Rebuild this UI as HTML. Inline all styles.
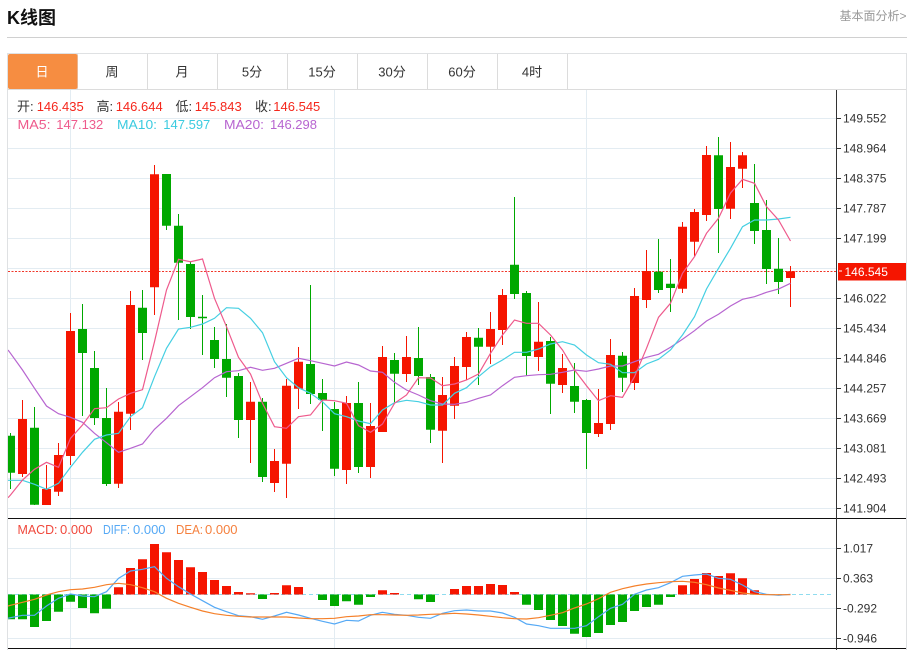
<!DOCTYPE html>
<html lang="zh">
<head>
<meta charset="utf-8">
<title>K线图</title>
<style>
html,body{margin:0;padding:0;background:#fff;width:909px;height:650px;overflow:hidden}
svg{display:block;font-family:"Liberation Sans","Noto Sans CJK SC",sans-serif}
</style>
</head>
<body>
<svg xmlns="http://www.w3.org/2000/svg" width="909" height="650" viewBox="0 0 909 650">
<defs><clipPath id="c"><rect x="8" y="90" width="828" height="560"/></clipPath></defs>

<text x="7" y="24" font-size="18" font-weight="700" fill="#111">K线图</text>
<text x="839.5" y="20" font-size="12" fill="#999">基本面分析&gt;</text>
<path d="M7 37.5H907" stroke="#d0d0d0" fill="none"/>

<path d="M7.5 650V53.5H906.5V650" stroke="#dfe1e3" fill="none"/>
<path d="M8 89.5H906M147.5 54V89M217.5 54V89M287.5 54V89M357.5 54V89M427.5 54V89M497.5 54V89M567.5 54V89M77.5 54V89" stroke="#dcdcdc" fill="none"/>
<rect x="8" y="54" width="69.5" height="35" rx="2" fill="#f68d41"/>
<g font-size="13" fill="#333" text-anchor="middle">
<text x="42" y="76.5" fill="#fff">日</text>
<text x="112" y="76.5">周</text>
<text x="182" y="76.5">月</text>
<text x="252" y="76.5">5分</text>
<text x="322" y="76.5">15分</text>
<text x="392" y="76.5">30分</text>
<text x="462" y="76.5">60分</text>
<text x="532" y="76.5">4时</text>
</g>

<path d="M8 118.5H836M8 148.5H836M8 178.5H836M8 208.5H836M8 238.5H836M8 268.5H836M8 298.5H836M8 328.5H836M8 358.5H836M8 388.5H836M8 418.5H836M8 448.5H836M8 478.5H836M8 508.5H836M8 548.5H836M8 578.5H836M8 608.5H836M8 638.5H836M70.5 90V648M334.5 90V648M586.5 90V648" stroke="#e3ecf2" fill="none"/>

<path d="M8 271.5H836" stroke="#f0372a" stroke-dasharray="2 1.5" fill="none"/>

<g clip-path="url(#c)">
<path fill="none" stroke="#f51500" d="M22.5 400V477M46.5 465V505M58.5 443V496M70.5 313V465M118.5 402V488M130.5 291V430M154.5 165V315M250.5 382V463M274.5 449V492M286.5 379V498M298.5 347V409M346.5 396V484M370.5 403V478M382.5 346V432M406.5 336V382M442.5 377V463M454.5 357V419M466.5 332V380M490.5 312V364M502.5 289V345M538.5 302V371M562.5 354V393M598.5 389V437M610.5 339V430M634.5 288V390M646.5 250V308M682.5 222V293M694.5 209V256M706.5 146V221M730.5 142V219M742.5 152V188M790.5 266V307"/>
<path fill="none" stroke="#00a800" d="M10.5 433V489M34.5 407V505M82.5 304V416M94.5 351V425M106.5 388V486M142.5 290V360M166.5 174V230M178.5 214V320M190.5 261V329M202.5 295V355M214.5 327V368M226.5 324V397M238.5 373V438M262.5 398V482M310.5 285V404M322.5 379V431M334.5 402V476M358.5 382V473M394.5 353V403M418.5 327V385M430.5 374V443M478.5 328V385M514.5 197V299M526.5 291V376M550.5 337V414M574.5 363V413M586.5 399V469M622.5 352V392M658.5 239V293M670.5 259V312M718.5 137V253M754.5 164V244M766.5 200V284M778.5 238V294"/>
<path fill="#f51500" d="M18 419h9v55h-9zM42 489h9v16h-9zM54 455h9v36.7h-9zM66 331h9v125h-9zM114 411.7h9v72h-9zM126 305h9v108.7h-9zM150 174.3h9v113h-9zM246 401.7h9v18.3h-9zM270 461h9v22h-9zM282 385.7h9v78h-9zM294 361.7h9v27h-9zM342 403h9v67h-9zM366 426h9v41h-9zM378 357h9v75h-9zM402 357h9v17h-9zM438 395h9v35.7h-9zM450 366h9v39.7h-9zM462 337h9v30h-9zM486 329h9v17.7h-9zM498 295h9v35h-9zM534 341.7h9v15.3h-9zM558 368h9v17h-9zM594 423h9v11h-9zM606 355h9v69h-9zM630 296h9v87h-9zM642 271h9v29h-9zM678 226.7h9v62h-9zM690 212h9v29.7h-9zM702 155h9v60h-9zM726 167h9v41.7h-9zM738 155.3h9v13.4h-9zM786 271.3h9v6.7h-9z"/>
<path fill="#00a800" d="M8 435.7h7v37h-7zM30 427.7h9v77h-9zM78 329h9v24h-9zM90 368h9v50h-9zM102 418h9v66h-9zM138 307.7h9v25.3h-9zM162 174h9v51.7h-9zM174 225.7h9v37h-9zM186 264h9v53h-9zM198 316.7h9v1.5h-9zM210 340h9v19h-9zM222 359h9v18.7h-9zM234 376h9v44h-9zM258 401.7h9v75.3h-9zM306 364h9v30h-9zM318 393h9v7h-9zM330 409h9v59.7h-9zM354 403h9v64h-9zM390 360h9v13.7h-9zM414 358h9v18h-9zM426 377h9v52.7h-9zM474 337.7h9v9h-9zM510 264.7h9v29.3h-9zM522 293h9v63h-9zM546 341h9v42.7h-9zM570 386h9v15.7h-9zM582 400h9v33h-9zM618 355.7h9v22h-9zM654 271.7h9v18.3h-9zM666 283.7h9v4.3h-9zM714 155.3h9v53.7h-9zM750 203h9v28h-9zM762 230h9v39h-9zM774 268.7h9v13.3h-9z"/>

<polyline fill="none" stroke="#b765d0" stroke-width="1.2" points="8,350 10.5,353.3 22.5,370 34.5,388.3 46.5,406 58.5,413.7 70.5,417.3 82.5,422.3 94.5,433.3 106.5,442.7 118.5,452.3 130.5,448.3 142.5,444 154.5,429.3 166.5,418.3 178.5,405.7 190.5,396.7 202.5,387.7 214.5,377.7 226.5,371.7 238.5,370.7 250.5,367.3 262.5,370.3 274.5,368.3 286.5,363.3 298.5,358.3 310.5,360.7 322.5,363.3 334.5,366 346.5,362 358.5,365 370.5,371 382.5,372.3 394.5,382.3 406.5,390 418.5,395 430.5,400.7 442.5,404 454.5,404.3 466.5,402.3 478.5,398.3 490.5,395 502.5,385.7 514.5,377.3 526.5,375.7 538.5,374.7 550.5,374.3 562.5,372.3 574.5,370 586.5,371.3 598.5,369 610.5,366 622.5,366 634.5,361.7 646.5,357.3 658.5,354.3 670.5,347.3 682.5,339.3 694.5,330.7 706.5,321 718.5,314.3 730.5,306 742.5,299.3 754.5,296.7 766.5,292.3 778.5,289 790.5,283.3"/>
<polyline fill="none" stroke="#45cfe2" stroke-width="1.2" points="8,480.3 22.5,480.3 34.5,484.3 46.5,489.3 58.5,483.3 70.5,467.3 82.5,452.3 94.5,439.3 106.5,435 118.5,433.3 130.5,416.7 142.5,407.7 154.5,376.7 166.5,348.3 178.5,329 190.5,327.3 202.5,324 214.5,318.3 226.5,307.7 238.5,308.3 250.5,318.3 262.5,332.7 274.5,361.7 286.5,377.7 298.5,387.7 310.5,393.3 322.5,401.7 334.5,413.7 346.5,416.7 358.5,421 370.5,423.7 382.5,410 394.5,402.7 406.5,400.3 418.5,401.7 430.5,405 442.5,405 454.5,393.3 466.5,387.7 478.5,376.7 490.5,366.7 502.5,360 514.5,352.3 526.5,352.3 538.5,349 550.5,344 562.5,341.7 574.5,345 586.5,355 598.5,362.7 610.5,364.3 622.5,372.7 634.5,372.7 646.5,364 658.5,359.3 670.5,350 682.5,335 694.5,316.7 706.5,289 718.5,268.3 730.5,248.3 742.5,226.7 754.5,220 766.5,220 778.5,219 790.5,217.3"/>
<polyline fill="none" stroke="#ee5a8c" stroke-width="1.2" points="8,497.7 10.5,495 22.5,480 34.5,469.3 46.5,462.3 58.5,467.3 70.5,438.3 82.5,425 94.5,408.7 106.5,407.7 118.5,399 130.5,393.3 142.5,389.7 154.5,341.7 166.5,290 178.5,259.3 190.5,261.7 202.5,259 214.5,298.3 226.5,326.7 238.5,357.3 250.5,374 262.5,403.3 274.5,426.7 286.5,428.3 298.5,416.7 310.5,415 322.5,400 334.5,400.7 346.5,403.3 358.5,425.7 370.5,432.3 382.5,424 394.5,403.3 406.5,395 418.5,377.7 430.5,378 442.5,385.7 454.5,384 466.5,380 478.5,374 490.5,353.3 502.5,335 514.5,320 526.5,323.3 538.5,323.3 550.5,335 562.5,350 574.5,370 586.5,385.7 598.5,400.7 610.5,395.7 622.5,397.3 634.5,376.7 646.5,348.3 658.5,317.3 670.5,303.3 682.5,273.3 694.5,256.7 706.5,233.3 718.5,218.3 730.5,193 742.5,179.3 754.5,183.3 766.5,206.7 778.5,220 790.5,241"/>

<path d="M8 594.5H833" stroke="#8fdcef" stroke-dasharray="4 3" fill="none"/>
<path fill="#f51500" d="M114 587.3h9v7.2h-9zM126 568h9v26.5h-9zM138 559.3h9v35.2h-9zM150 544h9v50.5h-9zM162 552.3h9v42.2h-9zM174 560h9v34.5h-9zM186 567.3h9v27.2h-9zM198 572h9v22.5h-9zM210 580h9v14.5h-9zM222 586h9v8.5h-9zM234 592h9v2.5h-9zM246 593.3h9v1.2h-9zM270 593h9v1.5h-9zM282 585.3h9v9.2h-9zM294 587h9v7.5h-9zM378 590.3h9v4.2h-9zM390 593h9v1.5h-9zM450 589h9v5.5h-9zM462 586h9v8.5h-9zM474 586h9v8.5h-9zM486 584h9v10.5h-9zM498 585h9v9.5h-9zM510 592h9v2.5h-9zM678 585.3h9v9.2h-9zM690 579h9v15.5h-9zM702 573h9v21.5h-9zM714 576h9v18.5h-9zM726 573.3h9v21.2h-9zM738 578.3h9v16.2h-9zM750 590.3h9v4.2h-9z"/>
<path fill="#00a800" d="M8 594.5h7v24.8h-7zM18 594.5h9v24.8h-9zM30 594.5h9v32.5h-9zM42 594.5h9v26.5h-9zM54 594.5h9v17.2h-9zM66 594.5h9v7.2h-9zM78 594.5h9v13.5h-9zM90 594.5h9v18.8h-9zM102 594.5h9v14.2h-9zM258 594.5h9v4.5h-9zM318 594.5h9v5.5h-9zM330 594.5h9v11.5h-9zM342 594.5h9v6.8h-9zM354 594.5h9v10.2h-9zM366 594.5h9v2.5h-9zM414 594.5h9v4.8h-9zM426 594.5h9v7.5h-9zM522 594.5h9v10.2h-9zM534 594.5h9v15.5h-9zM546 594.5h9v25.5h-9zM558 594.5h9v31.5h-9zM570 594.5h9v39.2h-9zM582 594.5h9v42.5h-9zM594 594.5h9v38.5h-9zM606 594.5h9v30.5h-9zM618 594.5h9v27.5h-9zM630 594.5h9v16.5h-9zM642 594.5h9v12.5h-9zM654 594.5h9v10.2h-9zM666 594.5h9v2.5h-9z"/>
<polyline fill="none" stroke="#55a9f5" stroke-width="1.2" points="8,618.3 10.5,617.7 22.5,615.3 34.5,615.3 46.5,606 58.5,598.3 70.5,594 82.5,596 94.5,596.7 106.5,591.7 118.5,578.3 130.5,571 142.5,569.3 154.5,566.7 166.5,578.3 178.5,586.7 190.5,594 202.5,600.7 214.5,607.3 226.5,611.7 238.5,615.7 250.5,616.7 262.5,619.3 274.5,616 286.5,612.3 298.5,615 310.5,618.3 322.5,621.3 334.5,624 346.5,620.3 358.5,621 370.5,615.3 382.5,612.3 394.5,614.3 406.5,615.3 418.5,617.3 430.5,618.3 442.5,613.3 454.5,610.7 466.5,610 478.5,611 490.5,611 502.5,613 514.5,617.3 526.5,624 538.5,625.7 550.5,628.3 562.5,628.3 574.5,628.3 586.5,625.7 598.5,616.7 610.5,608.3 622.5,604.3 634.5,594.3 646.5,590 658.5,587.7 670.5,582.7 682.5,576.3 694.5,575 706.5,574 718.5,578.3 730.5,579.3 742.5,585 754.5,591.7 766.5,594.3 778.5,595.3 790.5,594.3"/>
<polyline fill="none" stroke="#f5802a" stroke-width="1.2" points="8,606 10.5,605.3 22.5,602.3 34.5,599.3 46.5,595 58.5,591.7 70.5,589.7 82.5,589 94.5,587.3 106.5,584.7 118.5,583.3 130.5,584.7 142.5,587.7 154.5,591.7 166.5,598.3 178.5,603.3 190.5,607.3 202.5,611 214.5,613.7 226.5,615.3 238.5,616.3 250.5,617 262.5,617 274.5,617 286.5,617 298.5,618 310.5,618.7 322.5,618.7 334.5,618.3 346.5,616.7 358.5,616 370.5,614.7 382.5,614.7 394.5,615 406.5,615.3 418.5,615 430.5,614.3 442.5,614 454.5,613.3 466.5,614 478.5,615 490.5,616.3 502.5,617.7 514.5,618.7 526.5,619 538.5,617.7 550.5,615.3 562.5,612.7 574.5,608 586.5,604 598.5,598.7 610.5,592.3 622.5,588.7 634.5,586 646.5,584 658.5,582.7 670.5,581.7 682.5,581.3 694.5,582.3 706.5,584.7 718.5,588 730.5,590.3 742.5,593 754.5,594.3 766.5,594.7 778.5,594.7 790.5,594.7"/>
</g>

<path d="M8 518.5H906M8 648.5H906" stroke="#111" fill="none"/>
<path d="M836.5 90V650" stroke="#333" fill="none"/>
<path d="M837 118.5h4M837 148.5h4M837 178.5h4M837 208.5h4M837 238.5h4M837 298.5h4M837 328.5h4M837 358.5h4M837 388.5h4M837 418.5h4M837 448.5h4M837 478.5h4M837 508.5h4M837 548.5h4M837 578.5h4M837 608.5h4M837 638.5h4" stroke="#333" fill="none"/>

<g font-size="12" fill="#333">
<text x="843" y="122.5">149.552</text>
<text x="843" y="152.5">148.964</text>
<text x="843" y="182.5">148.375</text>
<text x="843" y="212.5">147.787</text>
<text x="843" y="242.5">147.199</text>
<text x="843" y="302.5">146.022</text>
<text x="843" y="332.5">145.434</text>
<text x="843" y="362.5">144.846</text>
<text x="843" y="392.5">144.257</text>
<text x="843" y="422.5">143.669</text>
<text x="843" y="452.5">143.081</text>
<text x="843" y="482.5">142.493</text>
<text x="843" y="512.5">141.904</text>
<text x="843" y="552.5">1.017</text>
<text x="843" y="582.5">0.363</text>
<text x="843" y="612.5">-0.292</text>
<text x="843" y="642.5">-0.946</text>
</g>
<rect x="838" y="263" width="68" height="17.5" fill="#f51500"/>
<path d="M839 271h3" stroke="#fff" fill="none"/>
<text x="844.5" y="276" font-size="12" fill="#fff">146.545</text>

<g font-size="13">
<g fill="#333">
<text x="17" y="111">开:</text>
<text x="96.5" y="111">高:</text>
<text x="175.5" y="111">低:</text>
<text x="255" y="111">收:</text>
</g>
<g fill="#f5271c">
<text x="36.7" y="111">146.435</text>
<text x="115.7" y="111">146.644</text>
<text x="194.7" y="111">145.843</text>
<text x="273.3" y="111">146.545</text>
</g>
<g fill="#ee5a8c"><text x="17.5" y="129" textLength="33" lengthAdjust="spacingAndGlyphs">MA5:</text><text x="56.3" y="129">147.132</text></g>
<g fill="#3bcbe0"><text x="117" y="129" textLength="40" lengthAdjust="spacingAndGlyphs">MA10:</text><text x="163.3" y="129">147.597</text></g>
<g fill="#b765d0"><text x="224" y="129" textLength="40" lengthAdjust="spacingAndGlyphs">MA20:</text><text x="270" y="129">146.298</text></g>
<g fill="#f0483c"><text x="17.5" y="534" textLength="40" lengthAdjust="spacingAndGlyphs">MACD:</text><text x="60" y="534">0.000</text></g>
<g fill="#55a9f5"><text x="103" y="534" textLength="27" lengthAdjust="spacingAndGlyphs">DIFF:</text><text x="133" y="534">0.000</text></g>
<g fill="#f5803e"><text x="176" y="534" textLength="27" lengthAdjust="spacingAndGlyphs">DEA:</text><text x="205" y="534">0.000</text></g>
</g>
</svg>
</body>
</html>
